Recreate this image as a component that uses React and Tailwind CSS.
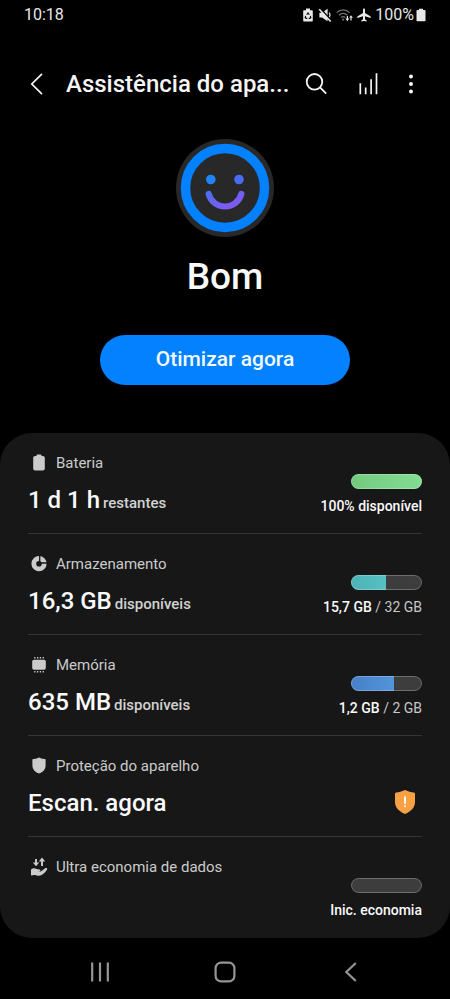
import { useState } from 'react';

const ITEMS = [
  {
    id: 'battery',
    label: 'Bateria',
    icon: BatteryIcon,
    value: '1 d 1 h',
    unit: 'restantes',
    bar: { percent: 100, color: 'bg-linear-to-r from-[#74cb80] to-[#82dc92]' },
    strong: '100% disponível',
  },
  {
    id: 'storage',
    label: 'Armazenamento',
    icon: StorageIcon,
    value: '16,3 GB',
    unit: 'disponíveis',
    bar: { percent: 49, color: 'bg-linear-to-r from-[#4db3b8] to-[#56c0c3]' },
    strong: '15,7 GB',
    rest: ' / 32 GB',
  },
  {
    id: 'memory',
    label: 'Memória',
    icon: MemoryIcon,
    value: '635 MB',
    unit: 'disponíveis',
    bar: { percent: 60, color: 'bg-linear-to-r from-[#4680c8] to-[#5294da]' },
    strong: '1,2 GB',
    rest: ' / 2 GB',
  },
  {
    id: 'protection',
    label: 'Proteção do aparelho',
    icon: ShieldIcon,
    value: 'Escan. agora',
    warning: true,
  },
  {
    id: 'data',
    label: 'Ultra economia de dados',
    icon: DataSaverIcon,
    bar: { percent: 0, color: '' },
    strong: 'Inic. economia',
  },
];

function BatteryIcon() {
  return (
    <svg width="22" height="20" viewBox="0 0 22 20" fill="currentColor">
      <path d="M8.500 2.400c0-.5.3-.8.8-.8h3.400c.5 0 .8.3.8.8V3h1.300c1.200 0 2 .8 2 2v10.600c0 1.200-.8 2-2 2H7.200c-1.200 0-2-.8-2-2V5c0-1.200.8-2 2-2h1.300z" />
    </svg>
  );
}

function StorageIcon() {
  return (
    <svg width="22" height="20" viewBox="0 0 22 20" fill="none">
      <circle cx="11" cy="9.700" r="5.200" stroke="currentColor" strokeWidth="4.800" />
      <path d="M11.700 1.700V9H19" stroke="#171717" strokeWidth="1.300" />
    </svg>
  );
}

function MemoryIcon() {
  return (
    <svg width="22" height="20" viewBox="0 0 22 20" fill="currentColor">
      <rect x="4.200" y="4.700" width="13.600" height="10" rx="1.800" />
      <path d="M6.200 2h1.300v1.500H6.200zM9 2h1.300v1.500H9zM11.800 2h1.300v1.500h-1.300zM14.600 2h1.300v1.500h-1.300zM6.200 15.900h1.300v1.500H6.200zM9 15.900h1.300v1.500H9zM11.800 15.900h1.300v1.500h-1.300zM14.600 15.900h1.300v1.500h-1.300z" />
    </svg>
  );
}

function ShieldIcon() {
  return (
    <svg width="22" height="20" viewBox="0 0 22 20" fill="currentColor">
      <path d="M10.400 1.700c.4-.2.8-.2 1.200 0 1.600.8 3.300 1.200 5.200 1.300.5 0 .8.400.8.800v5.600c0 3.700-2.400 6.200-5.900 7.900-.4.200-.9.200-1.300 0-3.500-1.700-6-4.200-6-7.900V3.800c0-.4.300-.8.800-.8 1.900-.1 3.600-.5 5.200-1.300z" />
    </svg>
  );
}

function DataSaverIcon() {
  return (
    <svg width="22" height="20" viewBox="0 0 22 20" fill="none">
      <path d="M8 2v4M14 9V4" stroke="currentColor" strokeWidth="1.900" />
      <path d="M4.800 5.400h6.400L8 9.200zM10.800 4.400h6.400L14 .4z" fill="currentColor" />
      <path
        d="M3 12.400c1.700-1.400 3.500-1.500 5.100-.7 1 .5 2 .8 3.400.8 1.100 0 1.300 1.500.2 1.700l-2.100.3c1.700.3 3.300 0 4.600-1.100l2.600-2c1.300-.9 3.100-.1 2.300 1.200-1.500 2.500-3.500 4.400-5.500 5.500-1.700.9-3.300.8-5 .3-1.700-.5-3.300-.5-5.600.2z"
        fill="currentColor"
      />
    </svg>
  );
}

function WarningShield() {
  return (
    <svg width="22" height="26" viewBox="0 0 22 26" role="img" aria-label="Alerta">
      <path
        d="M10.300 1.200c.4-.2 1-.2 1.400 0 2.500 1.300 5.200 2 8.100 2.200.7.100 1.200.5 1.200 1.200v8.400c0 5.400-3.800 9.200-9.300 11.700-.4.200-1 .2-1.400 0C4.800 22.200 1 18.400 1 13V4.600c0-.7.5-1.100 1.200-1.200 2.900-.2 5.600-.9 8.100-2.200z"
        fill="#f7a144"
      />
      <path d="M11 8.200v6" stroke="#fff" strokeWidth="1.800" strokeLinecap="round" />
      <circle cx="11" cy="17.200" r="1" fill="#fff" />
    </svg>
  );
}

function StatusBar() {
  return (
    <div className="flex h-[29px] items-center justify-between px-6 text-base text-[#e8e8e8]">
      <span>10:18</span>
      <div className="flex items-center gap-1">
        <svg width="12" height="14" viewBox="0 0 12 14" aria-hidden="true">
          <path d="M4 .6h4v1.600h1.800c.6 0 1 .4 1 1v9.200c0 .6-.4 1-1 1H2.200c-.6 0-1-.4-1-1V3.200c0-.6.4-1 1-1H4z" fill="currentColor" />
          <path d="M4.700 6.700 6 4.900l1.300 1.800M8.200 7.900l.7 1.600-1 .9H6.700M5.300 10.400H4.100l-1-.9.700-1.600" stroke="#000" strokeWidth="1.100" fill="none" />
        </svg>
        <svg width="14" height="14" viewBox="0 0 14 14" fill="none" aria-hidden="true">
          <path d="M1.400 4.800H4L9.600.8v12.400L4 9.400H1.400z" fill="currentColor" />
          <path d="M11.300 4.600c.8 1.200.8 3.500 0 4.800" stroke="currentColor" strokeWidth="1.200" />
          <path d="m2.400.4 11 12" stroke="#000" strokeWidth="1.500" />
          <path d="m1.200 1.200 11.500 12.300" stroke="currentColor" strokeWidth="1.600" />
        </svg>
        <svg width="17" height="14" viewBox="0 0 17 14" fill="none" aria-hidden="true">
          <path d="M.8 4.600c3.400-3.700 9.400-3.700 12.800 0M3 7.200c2.300-2.400 6.100-2.400 8.400 0M5.100 9.600c1.200-1.200 3-1.200 4.200 0" stroke="#707070" strokeWidth="1.300" />
          <circle cx="7.200" cy="11.600" r="1.100" fill="#707070" />
          <path d="M11.400 8v3M15 12.400v-3" stroke="currentColor" strokeWidth="1.200" />
          <path d="M9.500 10.600h3.800l-1.900 2.600zM13.100 9.800h3.800L15 7.200z" fill="currentColor" />
        </svg>
        <svg width="14" height="14" viewBox="0 0 14 14" fill="currentColor" aria-hidden="true">
          <path d="M7 .4c.6 0 1 .5 1 1.200v3.500l5.700 3.500v1.400L8 8.200v3.100l1.700 1.200v1.100L7 12.900l-2.700.7v-1.100L6 11.300V8.200L.3 10V8.600L6 5.100V1.600C6 .9 6.400.4 7 .4z" />
        </svg>
        <span className="flex items-center gap-[2px]">
          100%
          <svg width="10" height="14" viewBox="0 0 10 14" fill="currentColor" aria-hidden="true">
            <path d="M3 .8h4V2h1.700c.5 0 .8.3.8.8v9.600c0 .5-.3.800-.8.800H1.300c-.5 0-.8-.3-.8-.8V2.800c0-.5.3-.8.8-.8H3z" />
          </svg>
        </span>
      </div>
    </div>
  );
}

function Header() {
  return (
    <header className="flex h-[110px] items-center pl-[25px] pr-[22px] text-[#f5f5f5]">
      <button type="button" aria-label="Voltar" className="flex h-12 w-[41px] items-center">
        <svg width="24" height="24" viewBox="0 0 24 24" fill="none" stroke="currentColor" strokeWidth="1.700">
          <path d="M17 1.800 6.800 12 17 22.200" />
        </svg>
      </button>
      <h1 className="min-w-0 flex-1 text-2xl font-medium whitespace-nowrap">Assistência do apa...</h1>
      <button type="button" aria-label="Pesquisar" className="flex h-12 w-[52px] items-center justify-center">
        <svg width="24" height="24" viewBox="0 0 24 24" fill="none" stroke="currentColor" strokeWidth="1.800">
          <circle cx="10.500" cy="9.800" r="7.800" />
          <path d="m16 15.400 6.200 6.200" />
        </svg>
      </button>
      <button type="button" aria-label="Uso" className="flex h-12 w-[52px] items-center justify-center">
        <svg width="24" height="24" viewBox="0 0 24 24" fill="none" stroke="currentColor" strokeWidth="1.700">
          <path d="M4.300 22.200V11.300M9.700 22.200v-6.600M15.100 22.200V7.200M20.500 22.200V1.300" />
        </svg>
      </button>
      <button type="button" aria-label="Mais opções" className="flex h-12 w-[34px] items-center justify-center">
        <svg width="24" height="24" viewBox="0 0 24 24" fill="currentColor">
          <circle cx="12" cy="4.600" r="2" />
          <circle cx="12" cy="12" r="2" />
          <circle cx="12" cy="19.400" r="2" />
        </svg>
      </button>
    </header>
  );
}

function Face() {
  return (
    <svg width="98" height="98" viewBox="0 0 98 98" fill="none" role="img" aria-label="Rosto sorridente">
      <defs>
        <linearGradient id="face" gradientUnits="userSpaceOnUse" x1="34" y1="36" x2="52" y2="72">
          <stop offset="0" stopColor="#1b86f5" />
          <stop offset="0.500" stopColor="#5a68f0" />
          <stop offset="1" stopColor="#8458f2" />
        </linearGradient>
      </defs>
      <circle cx="49" cy="49" r="49" fill="#282828" />
      <circle cx="49" cy="49" r="39.500" stroke="#0381fe" strokeWidth="9.500" />
      <circle cx="34.800" cy="40.500" r="4.800" fill="#1f84f4" />
      <circle cx="63" cy="40.500" r="4.800" fill="#4a6cf0" />
      <path d="M32.700 55c2 7.600 8.700 12.500 16.300 12.500S63.300 62.600 65.300 55" stroke="url(#face)" strokeWidth="6.200" strokeLinecap="round" />
    </svg>
  );
}

function UsageBar({ percent, color, label }) {
  return (
    <div
      role="meter"
      aria-label={label}
      aria-valuenow={percent}
      aria-valuemin={0}
      aria-valuemax={100}
      className="relative h-[15px] w-[71px] overflow-hidden rounded-full bg-[#3d3d3d]"
    >
      <div className={`h-full ${color}`} style={{ width: `${percent}%` }} />
      <div className="absolute inset-0 rounded-full border border-white/25" />
    </div>
  );
}

function Item({ item }) {
  const Icon = item.icon;
  return (
    <li className="flex min-h-[101px] justify-between border-b border-[#353535] pt-[18px] pb-[17px] last:border-transparent">
      <div>
        <div className="flex h-6 items-center gap-[6px] text-[#cbcbcb]">
          <Icon />
          <h2 className="text-[15px]">{item.label}</h2>
        </div>
        {item.value && (
          <p className="mt-[9px] text-2xl font-medium text-[#fafafa]">
            {item.value}
            {item.unit && <span className="ml-[3px] text-[15px] text-[#d2d2d2]">{item.unit}</span>}
          </p>
        )}
      </div>
      <div className="flex flex-col items-end justify-end gap-[7px] self-end">
        {item.bar && <UsageBar percent={item.bar.percent} color={item.bar.color} label={item.label} />}
        {item.strong && (
          <p className="text-sm leading-5 text-[#c8c8c8]">
            <span className="font-medium text-[#fafafa]">{item.strong}</span>
            {item.rest}
          </p>
        )}
        {item.warning && (
          <div className="pr-[6px] pb-1">
            <WarningShield />
          </div>
        )}
      </div>
    </li>
  );
}

function NavBar() {
  return (
    <nav className="flex h-[61px] items-center justify-around px-[37px] pt-[6px] text-[#959595]">
      <button type="button" aria-label="Recentes" className="p-3">
        <svg width="22" height="22" viewBox="0 0 22 22" fill="none" stroke="currentColor" strokeWidth="2.200">
          <path d="M3.200 1.500v19M11 1.500v19M18.800 1.500v19" />
        </svg>
      </button>
      <button type="button" aria-label="Início" className="p-3">
        <svg width="22" height="22" viewBox="0 0 22 22" fill="none" stroke="currentColor" strokeWidth="2.200">
          <rect x="1.600" y="1.600" width="18.800" height="18.800" rx="5.500" />
        </svg>
      </button>
      <button type="button" aria-label="Voltar" className="p-3">
        <svg width="22" height="22" viewBox="0 0 22 22" fill="none" stroke="currentColor" strokeWidth="2.200">
          <path d="M16.800 2 7.300 11l9.500 9" />
        </svg>
      </button>
    </nav>
  );
}

export default function App() {
  const [optimizing, setOptimizing] = useState(false);

  return (
    <div className="flex min-h-screen flex-col bg-black font-[Roboto,sans-serif]">
      <StatusBar />
      <Header />

      <main>
        {/* Overall status */}
        <section className="flex flex-col items-center pb-12">
          <Face />
          <p className="mt-4 text-[37px] leading-[48px] font-medium text-[#fafafa]">Bom</p>
          <button
            type="button"
            disabled={optimizing}
            onClick={() => setOptimizing(true)}
            className="mt-[34px] h-[50px] w-5/9 rounded-full bg-[#0381fe] text-[21px] font-medium text-[#f2faff]"
          >
            Otimizar agora
          </button>
        </section>

        {/* Device care items */}
        <ul className="rounded-[32px] bg-[#171717] px-7">
          {ITEMS.map(item => (
            <Item key={item.id} item={item} />
          ))}
        </ul>
      </main>

      <NavBar />
    </div>
  );
}
